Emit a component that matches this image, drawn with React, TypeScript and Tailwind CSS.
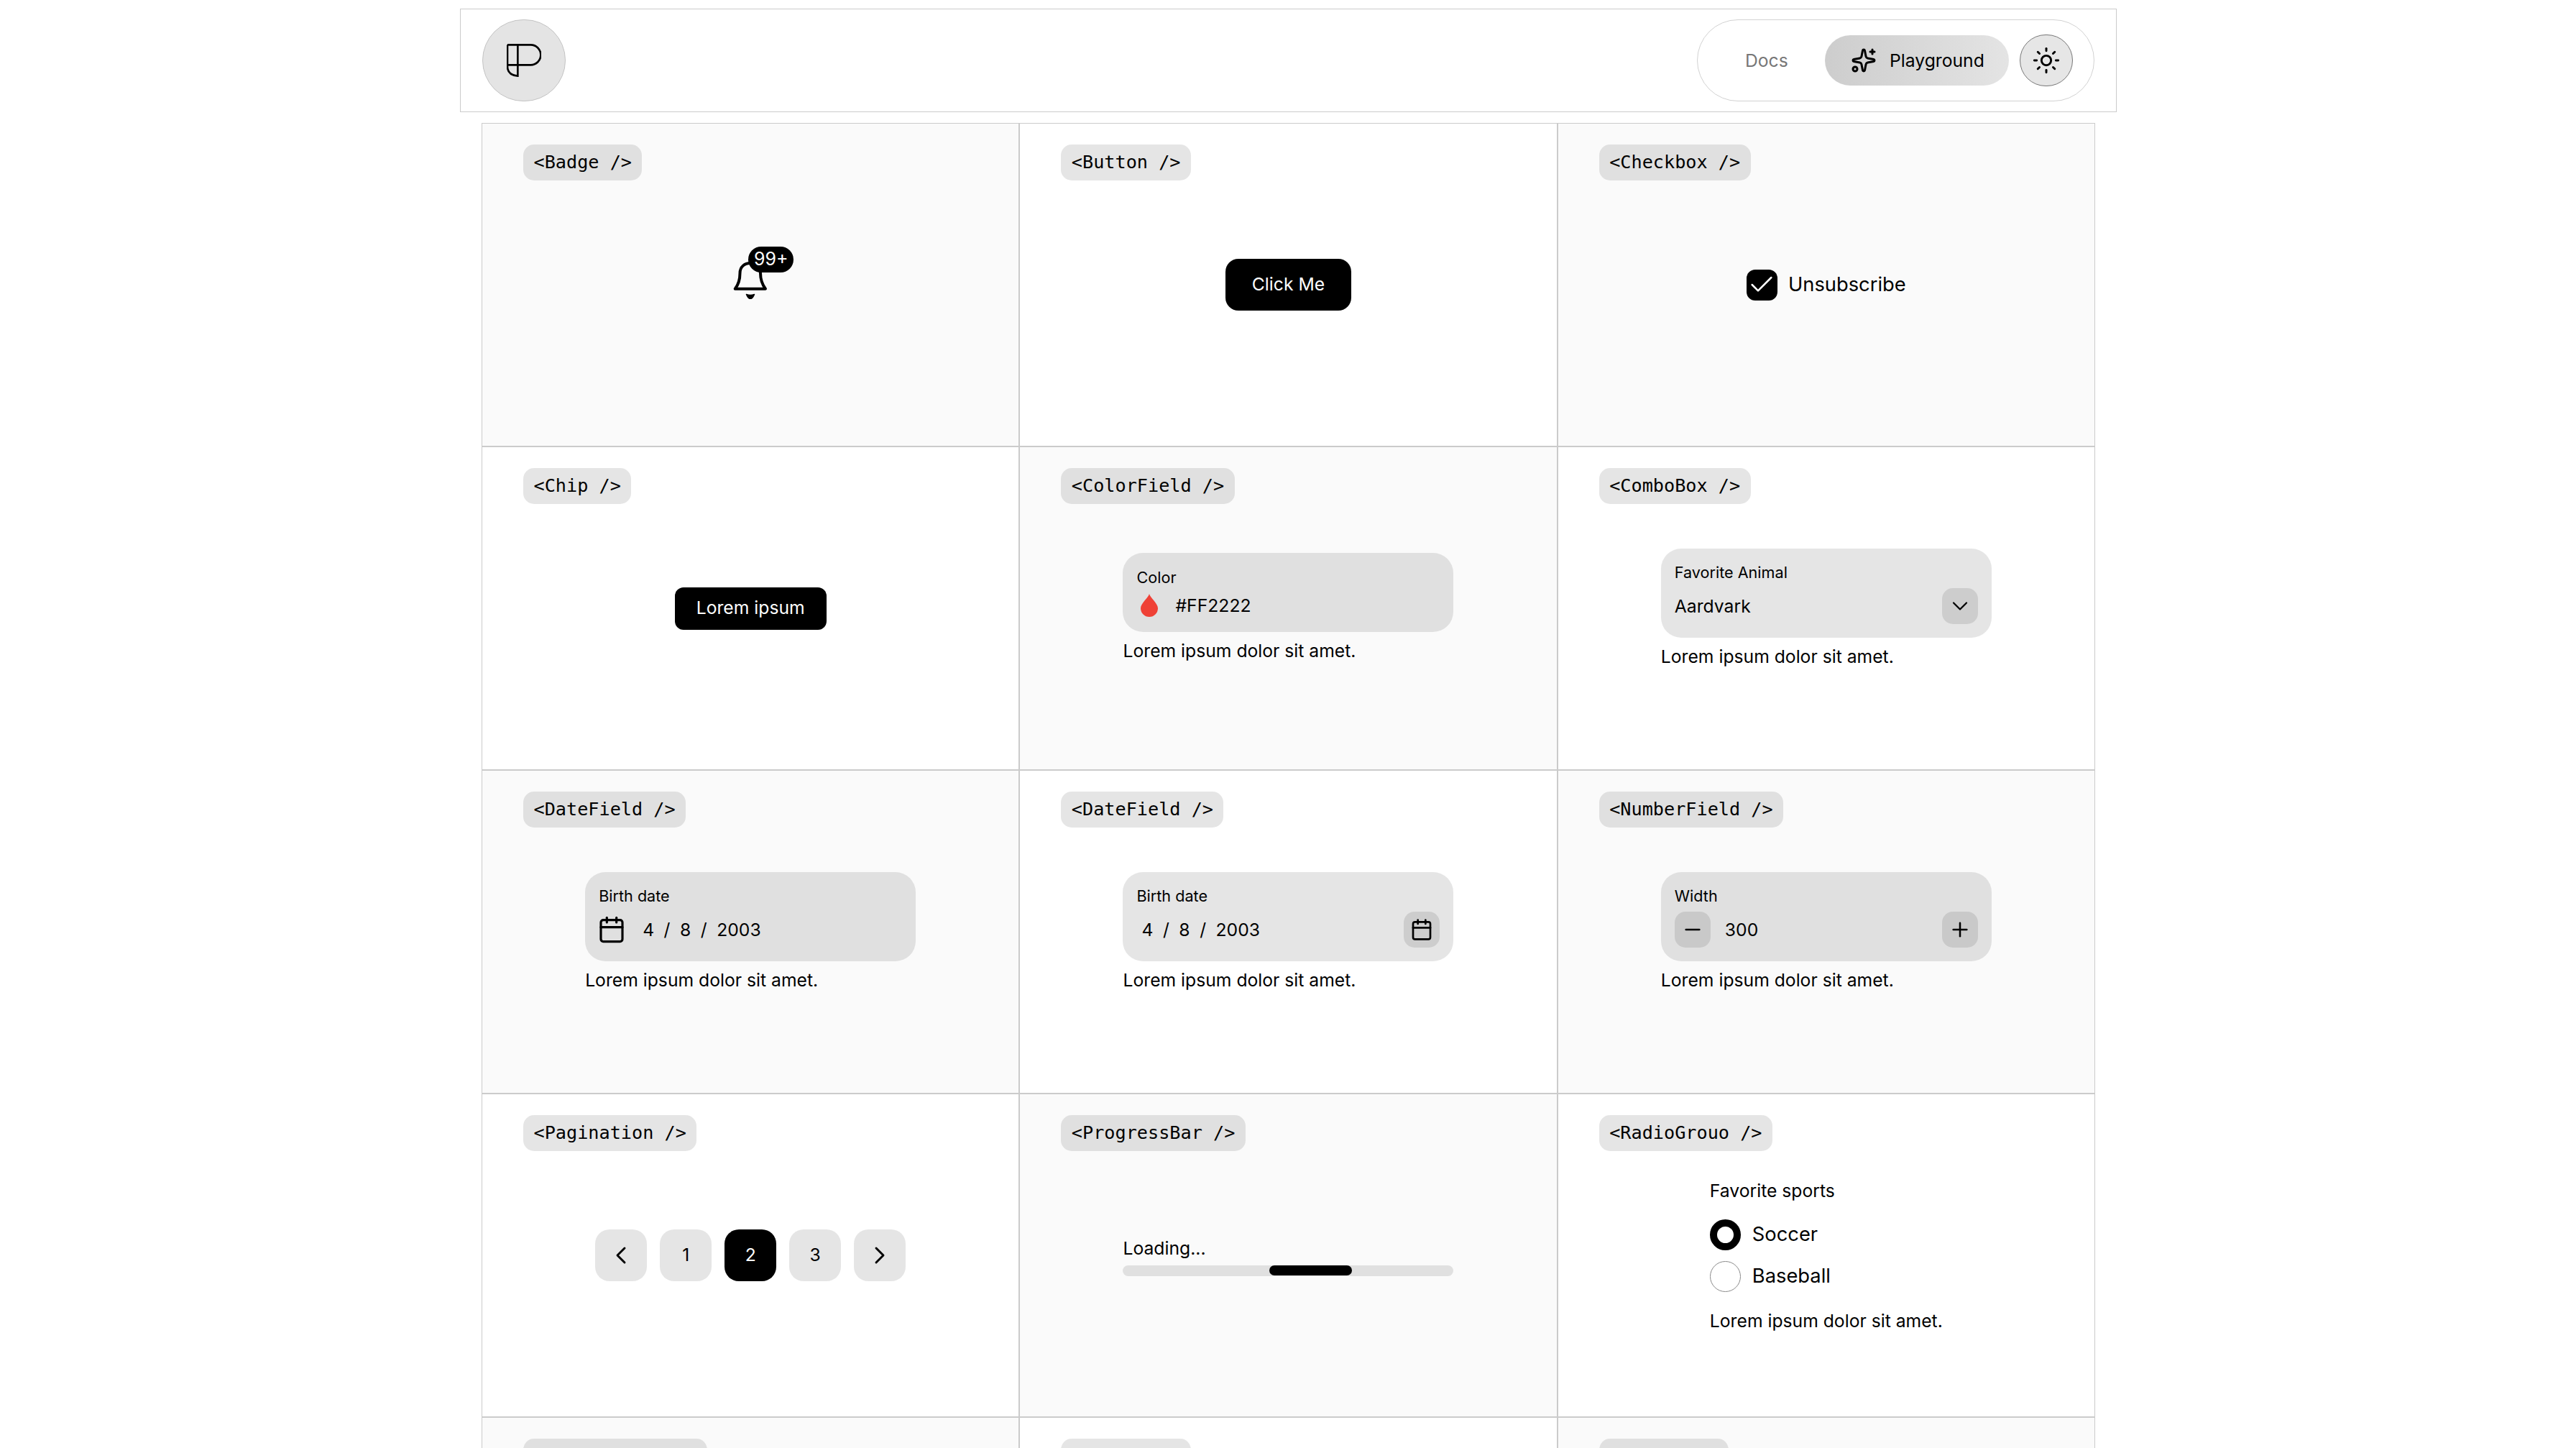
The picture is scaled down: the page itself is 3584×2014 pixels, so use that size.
import type { ReactNode } from "react";
import { Calendar, Check, ChevronDown, ChevronLeft, ChevronRight, Minus, Plus, Sparkles, Sun } from "lucide-react";

const inter = "font-['Inter',sans-serif]";
const mono = "font-['DejaVu_Sans_Mono',monospace]";

function Logo() {
  return (
    <svg width="48" height="46" viewBox="0 0 144 138" fill="none" stroke="black" strokeWidth="8">
      <path d="M3 4H100a42 42 0 0 1 0 84H3" />
      <path d="M3 4V94Q3 130 46 134V4" />
    </svg>
  );
}

function Bell() {
  return (
    <svg width="50" height="54" viewBox="0 0 50 54" fill="none">
      <path
        d="M3.7 39.7C9 33 10.5 27 10.5 18C10.5 9 17 4 25 4C33 4 39 9 39 18C39 27 41 33 46 39.7Z"
        stroke="black"
        strokeWidth="4"
        strokeLinejoin="round"
      />
      <path d="M19.5 47.5Q25 49.5 30.5 47.5Q28 53.5 25 53.5Q22 53.5 19.5 47.5Z" fill="black" stroke="black" strokeWidth="1.5" strokeLinejoin="round" />
    </svg>
  );
}

function Drop() {
  return (
    <svg width="24" height="32" viewBox="0 0 24 32">
      <path d="M12 0C13 5 24 13 24 20A12 12 0 0 1 0 20C0 13 11 5 12 0Z" fill="#ef4136" />
    </svg>
  );
}

function Cell({ name, odd, children }: { name: string; odd?: boolean; children?: ReactNode }) {
  return (
    <div className={`grid h-[450px] border border-[#cbcbcb] ${odd ? "bg-white" : "bg-[#fafafa]"}`}>
      <div
        className={`[grid-area:1/1] self-start justify-self-start ml-[57px] mt-[29px] h-[50px] px-[14.5px] flex items-center rounded-[15px] bg-black/10 whitespace-pre text-[25.2px] text-black ${mono}`}
      >
        {`<${name} />`}
      </div>
      <div className="[grid-area:1/1] self-center justify-self-center">{children}</div>
    </div>
  );
}

function Helper() {
  return <p className="mt-[11px] leading-[30px] text-[24.7px] text-black">Lorem ipsum dolor sit amet.</p>;
}

function FieldLabel({ children }: { children: ReactNode }) {
  return <div className="leading-[28px] text-[21.6px] text-black">{children}</div>;
}

function FieldButton({ children }: { children: ReactNode }) {
  return <div className="w-[50px] h-[50px] rounded-[15px] bg-black/10 flex items-center justify-center">{children}</div>;
}

function DateValue() {
  return (
    <div className="pt-[2px] flex items-center gap-[13.5px] text-[24.7px] text-black">
      <span>4</span>
      <span>/</span>
      <span>8</span>
      <span>/</span>
      <span>2003</span>
    </div>
  );
}

function PageButton({ active, children }: { active?: boolean; children: ReactNode }) {
  return (
    <div
      className={`w-[72px] h-[72px] rounded-[20px] flex items-center justify-center text-[24.7px] ${
        active ? "bg-black text-white" : "bg-black/10 text-black"
      }`}
    >
      {children}
    </div>
  );
}

export default function App() {
  return (
    <div className={`h-screen overflow-hidden bg-white ${inter}`}>
      <div className="w-[2305px] ml-[640px] pt-[12px]">
        {/* Header */}
        <header className="h-[144px] border border-[#cbcbcb] px-[30px] flex items-center justify-between">
          <div className="w-[116px] h-[114px] rounded-full border border-[#c4c4c4] bg-[#e4e4e4] flex items-center justify-center">
            <Logo />
          </div>
          <nav className="w-[553px] h-[114px] rounded-full border border-[#d2d2d2] pl-[66px] pr-[29px] flex items-center">
            <span className="w-[58px] pt-[2px] text-[24.7px] text-[#777777]">Docs</span>
            <div className="ml-[53px] w-[257px] h-[70px] rounded-full bg-gradient-to-r from-[#cdcdcd] to-[#e4e4e4] pl-[36px] flex items-center gap-[18px] text-[24.7px] text-black">
              <Sparkles size={36} strokeWidth={2} />
              <span className="pt-[2px]">Playground</span>
            </div>
            <div className="ml-[15px] w-[74px] h-[72px] rounded-full border border-[#777777] bg-[#e6e6e6] flex items-center justify-center">
              <Sun size={40} strokeWidth={1.75} />
            </div>
          </nav>
        </header>

        {/* Component grid */}
        <div className="mt-[15px] mx-[30px] grid grid-cols-3">
          <Cell name="Badge">
            <div className="relative w-[50px] h-[54px] mb-[14px]">
              <Bell />
              <div className="absolute left-[22px] top-[-19px] w-[63px] h-[36px] rounded-full bg-black flex items-center justify-center text-[25px] text-white">
                99+
              </div>
            </div>
          </Cell>

          <Cell name="Button" odd>
            <div className="w-[175px] h-[72px] rounded-[18px] bg-black flex items-center justify-center text-[24.7px] text-white">
              Click Me
            </div>
          </Cell>

          <Cell name="Checkbox">
            <div className="flex items-center gap-[15px]">
              <div className="w-[43px] h-[43px] rounded-[12px] bg-black flex items-center justify-center">
                <Check size={40} strokeWidth={1.5} className="text-white" />
              </div>
              <span className="text-[27.3px] text-black">Unsubscribe</span>
            </div>
          </Cell>

          <Cell name="Chip" odd>
            <div className="w-[211px] h-[59px] rounded-[12px] bg-black flex items-center justify-center text-[24.7px] text-white">
              Lorem ipsum
            </div>
          </Cell>

          <Cell name="ColorField">
            <div className="w-[460px] pb-[3px]">
              <div className="h-[110px] rounded-[28px] bg-black/10 pt-[20px] pl-[19px]">
                <FieldLabel>Color</FieldLabel>
                <div className="mt-[9px] h-[32px] pl-[6px] flex items-center gap-[24px] text-[24.7px] text-black">
                  <Drop />
                  <span className="pt-[2px]">#FF2222</span>
                </div>
              </div>
              <Helper />
            </div>
          </Cell>

          <Cell name="ComboBox" odd>
            <div className="w-[460px] pb-[2px]">
              <div className="h-[124px] rounded-[28px] bg-black/10 pt-[19px] px-[19px]">
                <FieldLabel>Favorite Animal</FieldLabel>
                <div className="mt-[8px] h-[50px] flex items-center justify-between text-[24.7px] text-black">
                  <span className="pt-[2px]">Aardvark</span>
                  <FieldButton>
                    <ChevronDown size={36} strokeWidth={1.5} />
                  </FieldButton>
                </div>
              </div>
              <Helper />
            </div>
          </Cell>

          <Cell name="DateField">
            <div className="w-[460px] pb-[2px]">
              <div className="h-[124px] rounded-[28px] bg-black/10 pt-[19px] px-[19px]">
                <FieldLabel>Birth date</FieldLabel>
                <div className="mt-[8px] h-[50px] -ml-[2px] flex items-center gap-[23px]">
                  <Calendar size={40} strokeWidth={1.9} />
                  <DateValue />
                </div>
              </div>
              <Helper />
            </div>
          </Cell>

          <Cell name="DateField" odd>
            <div className="w-[460px] pb-[2px]">
              <div className="h-[124px] rounded-[28px] bg-black/10 pt-[19px] px-[19px]">
                <FieldLabel>Birth date</FieldLabel>
                <div className="mt-[8px] h-[50px] pl-[7px] flex items-center justify-between">
                  <DateValue />
                  <FieldButton>
                    <Calendar size={32} strokeWidth={2} />
                  </FieldButton>
                </div>
              </div>
              <Helper />
            </div>
          </Cell>

          <Cell name="NumberField">
            <div className="w-[460px] pb-[2px]">
              <div className="h-[124px] rounded-[28px] bg-black/10 pt-[19px] px-[19px]">
                <FieldLabel>Width</FieldLabel>
                <div className="mt-[8px] h-[50px] flex items-center text-[24.7px] text-black">
                  <FieldButton>
                    <Minus size={32} strokeWidth={1.9} />
                  </FieldButton>
                  <span className="ml-[20px] pt-[2px] flex-1">300</span>
                  <FieldButton>
                    <Plus size={32} strokeWidth={1.9} />
                  </FieldButton>
                </div>
              </div>
              <Helper />
            </div>
          </Cell>

          <Cell name="Pagination" odd>
            <div className="flex gap-[18px]">
              <PageButton>
                <ChevronLeft size={40} strokeWidth={1.75} />
              </PageButton>
              <PageButton>1</PageButton>
              <PageButton active>2</PageButton>
              <PageButton>3</PageButton>
              <PageButton>
                <ChevronRight size={40} strokeWidth={1.75} />
              </PageButton>
            </div>
          </Cell>

          <Cell name="ProgressBar">
            <div className="w-[460px] pt-[3px]">
              <div className="leading-[30px] text-[24.7px] text-black">Loading...</div>
              <div className="mt-[9px] h-[15px] rounded-full bg-black/10 overflow-hidden">
                <div className="ml-[204px] w-[115px] h-[14px] rounded-full bg-black" />
              </div>
            </div>
          </Cell>

          <Cell name="RadioGrouo" odd>
            <div>
              <div className="leading-[30px] text-[24.7px] text-black">Favorite sports</div>
              <div className="mt-[25px] flex items-center gap-[16px] h-[44px] text-[27.3px] text-black">
                <div className="w-[43px] h-[43px] rounded-full border-[10px] border-black bg-white" />
                Soccer
              </div>
              <div className="mt-[14px] flex items-center gap-[16px] h-[44px] text-[27.3px] text-black">
                <div className="w-[43px] h-[43px] rounded-full border border-[#8a8a8a] bg-white" />
                Baseball
              </div>
              <p className="mt-[24px] leading-[30px] text-[24.7px] text-black">Lorem ipsum dolor sit amet.</p>
            </div>
          </Cell>

          <Cell name="SearchField" />
          <Cell name="Select" odd />
          <Cell name="Slider" />
        </div>
      </div>
    </div>
  );
}
